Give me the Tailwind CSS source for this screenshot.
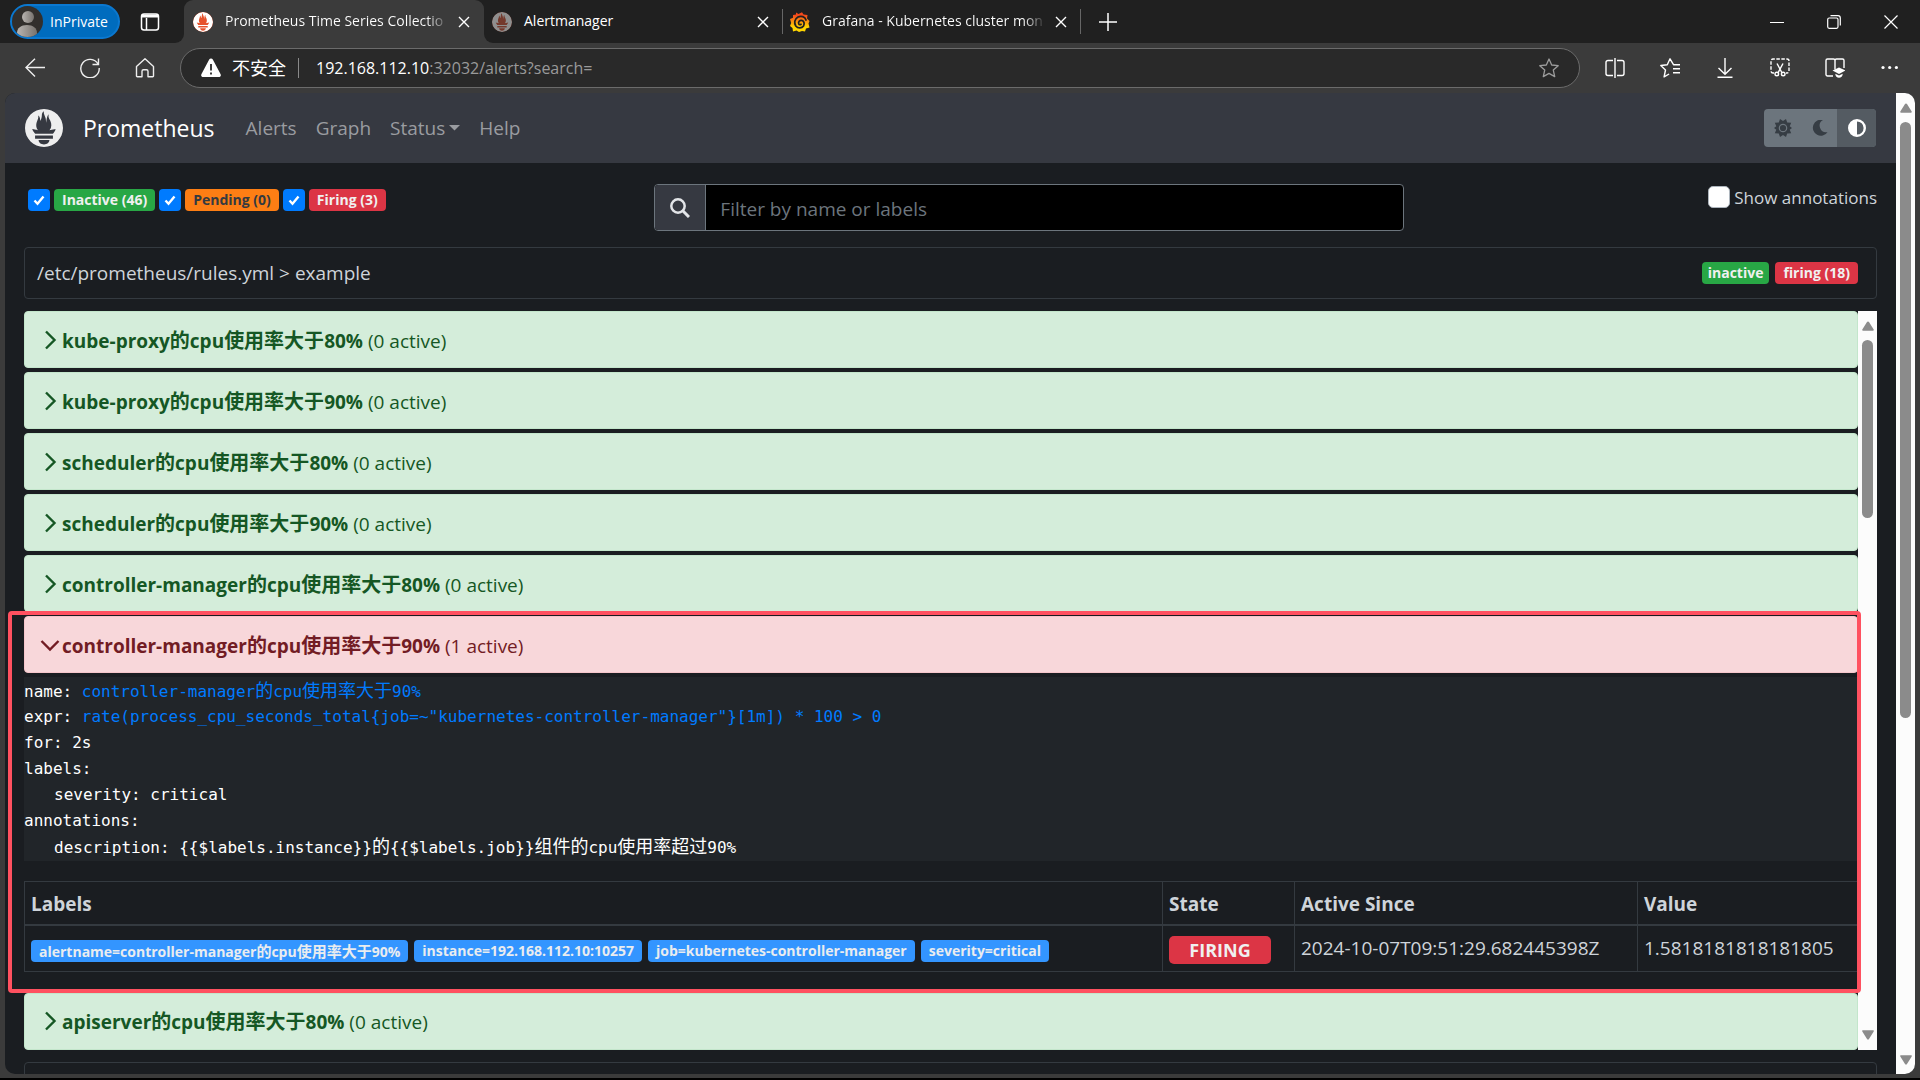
<!DOCTYPE html>
<html lang="zh">
<head>
    <meta charset="UTF-8">
    <meta name="viewport" content="width=device-width, initial-scale=1.0">
    <title>Prometheus Time Series Collection and Processing Server</title>
    <script src="https://cdn.jsdelivr.net/npm/@tailwindcss/browser@4"></script>
</head>
<body class="h-screen overflow-hidden bg-black pb-[2px] font-['Open_Sans','Noto_Sans_CJK_SC',sans-serif]">
    <svg class="hidden">
        <symbol id="flame" viewBox="0 0 24 24">
            <path fill="currentColor" d="M12 0C5.373 0 0 5.372 0 12c0 6.627 5.373 12 12 12s12-5.373 12-12c0-6.628-5.373-12-12-12zm0 22.46c-1.885 0-3.414-1.26-3.414-2.814h6.828c0 1.553-1.528 2.813-3.414 2.813zm5.64-3.745H6.36v-2.046h11.28v2.046zm-.04-3.098H6.391c-.037-.043-.075-.086-.111-.13-1.155-1.401-1.427-2.133-1.69-2.879-.005-.025 1.4.287 2.395.511 0 0 .513.119 1.262.255-.72-.843-1.147-1.915-1.147-3.01 0-2.406 1.845-4.508 1.18-6.207.648.053 1.34 1.367 1.387 3.422.689-.951.977-2.69.977-3.755 0-1.103.727-2.385 1.454-2.429-.648 1.069.168 1.984.894 4.256.272.854.237 2.29.447 3.201.07-1.892.395-4.652 1.595-5.605-.529 1.2.079 2.702.494 3.424.671 1.164 1.078 2.047 1.078 3.716a4.642 4.642 0 0 1-1.11 2.996c.792-.149 1.34-.283 1.34-.283l2.573-.502s-.374 1.538-1.81 3.019z"/>
        </symbol>
        <symbol id="close" viewBox="0 0 12 12">
            <path d="M1 1l10 10M11 1L1 11" fill="none" stroke="currentColor" stroke-width="1.4"/>
        </symbol>
        <symbol id="chevron-right" viewBox="0 0 20 20">
            <path d="M6 1.500l8.500 8.500L6 18.500" fill="none" stroke="currentColor" stroke-width="2.400"/>
        </symbol>
        <symbol id="chevron-down" viewBox="0 0 20 20">
            <path d="M1.500 6l8.500 8.500L18.500 6" fill="none" stroke="currentColor" stroke-width="2.400"/>
        </symbol>
        <symbol id="check" viewBox="0 0 12 12">
            <path d="M1.500 6.500l3 3.200L10.500 2.500" fill="none" stroke="currentColor" stroke-width="2.400"/>
        </symbol>
        <symbol id="arrow-up" viewBox="0 0 12 10">
            <path d="M6 .5c.5 0 .8.2 1 .6L11.700 8.500c.3.700 0 1.200-.7 1.200H1C.3 9.700 0 9.200.3 8.500L5 1.100C5.200.7 5.500.5 6 .5z" fill="#8b8b8b"/>
        </symbol>
    </svg>

    <div class="flex h-full flex-col bg-[#3b3b3b]">
        <!-- Tab strip -->
        <header class="flex h-[43px] shrink-0 text-[14px] text-white">
            <div class="flex w-[184px] items-center rounded-br-[9px] bg-[#202020] pl-[10px]">
                <button class="flex h-[35px] w-[110px] items-center gap-[7px] rounded-full border-2 border-[#0b78d0] bg-[#006cbe]">
                    <svg class="size-[31px] shrink-0" viewBox="0 0 31 31">
                        <defs>
                            <linearGradient id="skin"><stop offset="0" stop-color="#b9b5b1"/><stop offset="1" stop-color="#77726d"/></linearGradient>
                            <clipPath id="disc"><circle cx="15.500" cy="15.500" r="15.500"/></clipPath>
                        </defs>
                        <g clip-path="url(#disc)">
                            <path fill="#322f2c" d="M0 0h31v31H0z"/>
                            <circle cx="16" cy="11" r="6" fill="url(#skin)"/>
                            <path d="M5 31v-4c0-5 4-8 10-8s10 3 10 8v4z" fill="url(#skin)"/>
                        </g>
                    </svg>
                    InPrivate
                </button>
                <button class="ml-[20px]" aria-label="Tab actions">
                    <svg class="size-[20px]" viewBox="0 0 20 20" fill="none" stroke="#fff" stroke-width="1.500">
                        <rect x="1.500" y="2" width="17" height="16" rx="2.500"/>
                        <path d="M2 4h16" stroke-width="3"/><path d="M6.500 6v12"/>
                    </svg>
                </button>
            </div>
            <div class="w-[300px] bg-[#202020]">
                <div class="flex h-full items-center rounded-t-[9px] bg-[#3b3b3b] pl-[9px]">
                    <svg class="size-[20px] shrink-0 rounded-full bg-[#e6522c] text-white"><use href="#flame"/></svg>
                    <span class="ml-[12px] w-[224px] bg-linear-to-r from-white from-90% to-transparent bg-clip-text pb-[2px] whitespace-nowrap text-transparent">Prometheus Time Series Collectio</span>
                    <button class="ml-[9px]" aria-label="Close tab"><svg class="size-[12px]"><use href="#close"/></svg></button>
                </div>
            </div>
            <div class="flex grow rounded-bl-[9px] bg-[#202020]">
                <div class="flex w-[298px] items-center pl-[8px]">
                    <svg class="size-[20px] shrink-0 rounded-full bg-[#74392c] text-[#8f8f8f]"><use href="#flame"/></svg>
                    <span class="ml-[12px] w-[224px] pb-[2px] whitespace-nowrap">Alertmanager</span>
                    <button class="ml-[9px]" aria-label="Close tab"><svg class="size-[12px]"><use href="#close"/></svg></button>
                </div>
                <div class="my-[9px] w-px bg-[#666]"></div>
                <div class="flex w-[297px] items-center pl-[7px]">
                    <svg class="size-[20px] shrink-0" viewBox="0 0 20 20" fill="none">
                        <defs><linearGradient id="flare" x2="0" y2="1"><stop offset=".15" stop-color="#f4491c"/><stop offset=".75" stop-color="#ffd500"/></linearGradient></defs>
                        <path fill="url(#flare)" d="M6 .500l2.500 1.500L12 .300l1.500 2.200 4 .5-.5 3.500 2.500 2.500-1 2.500 1 4-3.500 1-1 3-3-.5L9 20l-2.500-1.500L3 19.500l-.5-3.500L0 14l1.200-3L0 7l3-1.200L3 3l3-.5z"/>
                        <path stroke="#202020" stroke-width="1.800" stroke-linecap="round" d="M16 8c-1-3.500-5-4.500-8-3-3.500 2-4.200 6-2.200 9 2 2.500 6 2.500 7.700 0 1.400-2.300.5-5-1.700-5.600-2.300-.4-3.800 1.600-3 3.400.5 1 1.600 1.100 2.200.5"/>
                    </svg>
                    <span class="ml-[12px] w-[224px] bg-linear-to-r from-white from-90% to-transparent bg-clip-text pb-[2px] whitespace-nowrap text-transparent">Grafana - Kubernetes cluster mon</span>
                    <button class="ml-[9px]" aria-label="Close tab"><svg class="size-[12px]"><use href="#close"/></svg></button>
                </div>
                <div class="my-[9px] w-px bg-[#666]"></div>
                <button class="ml-[18px]" aria-label="New tab">
                    <svg class="size-[18px]" viewBox="0 0 18 18"><path d="M9 0v18M0 9h18" stroke="#fff" stroke-width="1.500"/></svg>
                </button>
                <div class="ml-auto flex items-center gap-[43px] pr-[22px]">
                    <button aria-label="Minimize"><svg class="size-[14px]" viewBox="0 0 14 14"><path d="M0 7.500h14" stroke="#fff"/></svg></button>
                    <button aria-label="Restore"><svg class="size-[14px]" viewBox="0 0 14 14" fill="none" stroke="#fff" stroke-width="1.200"><rect x=".7" y="3" width="10.300" height="10.300" rx="1.500"/><path d="M3.500.700h7.500a2.300 2.300 0 0 1 2.300 2.300v7.500"/></svg></button>
                    <button aria-label="Close"><svg class="size-[14px]" viewBox="0 0 14 14"><path d="M.5.500l13 13M13.500.500l-13 13" stroke="#fff" stroke-width="1.200"/></svg></button>
                </div>
            </div>
        </header>

        <!-- Address bar -->
        <div class="flex h-[50px] shrink-0 items-center pr-[20px] pl-[25px] text-white">
            <div class="flex w-[155px] gap-[35px]">
                <button aria-label="Back"><svg class="size-[20px]" viewBox="0 0 20 20" fill="none" stroke="#eee" stroke-width="1.400"><path d="M20 9.500H1M10 .700L1 9.500l9 9"/></svg></button>
                <button aria-label="Refresh"><svg class="size-[20px]" viewBox="0 0 20 20" fill="none" stroke="#eee" stroke-width="1.400"><path d="M18 6A9.200 9.200 0 1 0 19.200 10M18.500.500v6h-6"/></svg></button>
                <button aria-label="Home"><svg class="size-[20px]" viewBox="0 0 20 20" fill="none" stroke="#eee" stroke-width="1.400" stroke-linejoin="round"><path d="M1.500 8.500L10 .800l8.500 7.700V18a.8.800 0 0 1-.8.800H13v-5.500a1.500 1.500 0 0 0-1.500-1.500h-3A1.500 1.500 0 0 0 7 13.300v5.500H2.300a.8.800 0 0 1-.8-.8z"/></svg></button>
            </div>
            <div class="flex h-[40px] grow items-center rounded-full border border-[#6b6b6b] bg-[#292929] px-[20px] text-[16px]">
                <svg class="size-[20px]" viewBox="0 0 20 20"><path d="M10 .500c.8 0 1.400.4 1.800 1.100l7.700 14.400c.9 1.600 0 3-1.700 3H2.200C.5 19-.4 17.600.5 16L8.200 1.600C8.600.9 9.200.5 10 .500z" fill="#fff"/><path d="M10 6v6.500M10 14.500v2" stroke="#292929" stroke-width="1.800"/></svg>
                <span class="ml-[11px] text-[18px]">不安全</span>
                <span class="mx-[12px] h-[20px] w-px bg-[#8a8a8a]"></span>
                <span class="ml-[5px] text-[#9a9a9a]"><span class="text-white">192.168.112.10</span>:32032/alerts?search=</span>
                <button class="ml-auto" aria-label="Favorite"><svg class="size-[20px]" viewBox="0 0 20 20" fill="none" stroke="#9c9c9c" stroke-width="1.300" stroke-linejoin="round"><path d="M10 1l2.700 6 6.500.700-4.900 4.400 1.400 6.500L10 15.400l-5.700 3.200 1.400-6.500L.8 7.700 7.300 7z"/></svg></button>
            </div>
            <div class="ml-[25px] flex gap-[35px]">
                <button aria-label="Split screen"><svg class="size-[20px]" viewBox="0 0 20 20" fill="none" stroke="#fff" stroke-width="1.400"><path d="M10 0v20M8 2.500H3a2 2 0 0 0-2 2v11a2 2 0 0 0 2 2h5M12 2.500h5a2 2 0 0 1 2 2v11a2 2 0 0 1-2 2h-5"/></svg></button>
                <button aria-label="Favorites"><svg class="size-[20px]" viewBox="0 0 20 20" fill="none" stroke="#fff" stroke-width="1.400" stroke-linejoin="round"><path d="M20 6.700h-6.500L10 .800 7.300 6.700 .8 7.500l4.700 4.500-1.400 6.800 5-2.800M13 10.800h7M13 14.800h7"/></svg></button>
                <button aria-label="Downloads"><svg class="size-[20px]" viewBox="0 0 20 20" fill="none" stroke="#fff" stroke-width="1.400"><path d="M10 0v16M3.500 10l6.500 6.300 6.500-6.300M2.500 19.300h15"/></svg></button>
                <button aria-label="Screenshot"><svg class="size-[20px]" viewBox="0 0 20 20" fill="none" stroke="#fff" stroke-width="1.400"><path d="M4 15H3a2 2 0 0 1-2-2V3a2 2 0 0 1 2-2h14a2 2 0 0 1 2 2v10a2 2 0 0 1-2 2h-1" stroke-dasharray="3.500 1.500"/><path d="M7 5.500l5 9.300M13 5.500l-5 9.300"/><circle cx="6.800" cy="16" r="1.800"/><circle cx="13.200" cy="16" r="1.800"/></svg></button>
                <button aria-label="Learning"><svg class="size-[20px]" viewBox="0 0 20 20" fill="none" stroke="#fff" stroke-width="1.400"><path d="M8 18H2.500A1.500 1.500 0 0 1 1 16.500v-14A1.500 1.500 0 0 1 2.500 1H8.500A1.500 1.500 0 0 1 10 2.500v9M10 2.500A1.500 1.500 0 0 1 11.500 1h6A1.500 1.500 0 0 1 19 2.500V10"/><path fill="#fff" stroke="none" d="M14 9.500l6.500 3-6.500 3.500-6.500-3.500zM10.300 15.800l3.700 1.700 3.700-1.700c0 2.700-1.700 4-3.700 4s-3.700-1.300-3.700-4z"/></svg></button>
                <button aria-label="Settings and more"><svg class="size-[20px]" viewBox="0 0 20 20" fill="#fff"><circle cx="3" cy="9.500" r="1.600"/><circle cx="9.700" cy="9.500" r="1.600"/><circle cx="16.400" cy="9.500" r="1.600"/></svg></button>
            </div>
        </div>

        <!-- Page -->
        <div class="mr-[5px] mb-[4px] ml-[5px] flex min-h-0 grow overflow-hidden rounded-[10px] bg-[#1a1d21] text-[19px] text-[#ced4da]">
            <div class="flex min-w-0 grow flex-col">
                <nav class="flex h-[70px] shrink-0 items-center bg-[#363941] px-[20px] text-[#9a9ca0]">
                    <svg class="size-[38px] text-[#eee]"><use href="#flame"/></svg>
                    <a href="#" class="ml-[20px] text-[23px] text-white">Prometheus</a>
                    <div class="ml-[31px] flex items-center gap-[19px]">
                        <a href="#">Alerts</a>
                        <a href="#">Graph</a>
                        <button class="flex items-center gap-[4px]">Status
                            <svg class="w-[11px]" viewBox="0 0 12 6"><path d="M0 0h12L6 6z" fill="currentColor"/></svg>
                        </button>
                        <a href="#">Help</a>
                    </div>
                    <div class="ml-auto flex h-[38px] overflow-hidden rounded-[4px] bg-[#6c757d]">
                        <button class="flex w-[38px] items-center justify-center" aria-label="Light">
                            <svg class="size-[18px]" viewBox="0 0 18 18"><path d="M6 0l3 2 3-2 1.200 3.500 4 .300-1.500 3.400L18 9l-2.300 1.800 1.500 3.400-4 .300L12 18l-3-2-3 2-1.200-3.500-4-.300 1.500-3.400L0 9l2.300-1.800L.8 3.800l4-.300z" fill="#363d44"/><circle cx="9" cy="9" r="3.700" fill="none" stroke="#6c757d" stroke-width="1.200"/></svg>
                        </button>
                        <button class="flex w-[35px] items-center justify-center" aria-label="Dark">
                            <svg class="size-[16px]" viewBox="0 0 16 16"><path d="M11 0a8 8 0 1 0 4.500 12.200A6.600 6.600 0 0 1 11 0z" fill="#363d44"/></svg>
                        </button>
                        <button class="flex w-[39px] items-center justify-center bg-[#545b62]" aria-label="Browser default">
                            <svg class="size-[18px]" viewBox="0 0 18 18"><circle cx="9" cy="9" r="7.800" fill="none" stroke="#fff" stroke-width="2.400"/><path d="M9 1v16A8 8 0 0 1 9 1z" fill="#fff"/></svg>
                        </button>
                    </div>
                </nav>

                <!-- Filters -->
                <form class="grid h-[84px] shrink-0 grid-cols-12 pt-[21px]">
                    <div class="col-span-4 flex items-start gap-[4px] pt-[5px] pl-[23px] text-[14px] font-bold text-[#f0f0f0]">
                        <span class="grid place-items-center">
                            <input id="inactive" type="checkbox" checked class="col-start-1 row-start-1 size-[22px] appearance-none rounded-[4px] bg-[#007bff]">
                            <svg class="pointer-events-none col-start-1 row-start-1 size-[12px] text-white"><use href="#check"/></svg>
                        </span>
                        <label for="inactive" class="rounded-[4px] bg-[#28a745] px-[8px] leading-[22px]">Inactive (46)</label>
                        <span class="grid place-items-center">
                            <input id="pending" type="checkbox" checked class="col-start-1 row-start-1 size-[22px] appearance-none rounded-[4px] bg-[#007bff]">
                            <svg class="pointer-events-none col-start-1 row-start-1 size-[12px] text-white"><use href="#check"/></svg>
                        </span>
                        <label for="pending" class="rounded-[4px] bg-[#fd7e14] px-[8px] leading-[22px] text-[#343a40]">Pending (0)</label>
                        <span class="grid place-items-center">
                            <input id="firing" type="checkbox" checked class="col-start-1 row-start-1 size-[22px] appearance-none rounded-[4px] bg-[#007bff]">
                            <svg class="pointer-events-none col-start-1 row-start-1 size-[12px] text-white"><use href="#check"/></svg>
                        </span>
                        <label for="firing" class="rounded-[4px] bg-[#dc3545] px-[8px] leading-[22px]">Firing (3)</label>
                    </div>
                    <div class="col-span-5 px-[19px]">
                        <div class="flex h-[47px] overflow-hidden rounded-[4px] border border-[#6c757d] bg-black">
                            <label for="search" class="flex w-[51px] items-center justify-center border-r border-[#6c757d] bg-[#363941]">
                                <svg class="size-[20px]" viewBox="0 0 20 20" fill="none" stroke="#e3e5e8" stroke-width="2.500"><circle cx="8" cy="8" r="6.700"/><path d="M12.800 12.800l6.200 6.200" stroke-width="3"/></svg>
                            </label>
                            <input id="search" type="text" placeholder="Filter by name or labels" class="min-w-0 grow px-[14px] pt-[3px] text-[19px] placeholder:text-[#6c757d]">
                        </div>
                    </div>
                    <div class="col-span-3 flex items-start justify-end gap-[4px] pr-[19px]">
                        <input id="annotations" type="checkbox" class="mt-[2px] size-[22px] appearance-none rounded-[5px] border border-[#adb5bd] bg-white">
                        <label for="annotations" class="text-[17px] leading-[28px]">Show annotations</label>
                    </div>
                </form>

                <main class="px-[19px]">
                    <div class="flex h-[52px] items-center gap-[6px] rounded-[4px] border border-[#343a40] pr-[18px] pl-[12px]">
                        <span class="mr-auto">/etc/prometheus/rules.yml &gt; example</span>
                        <span class="rounded-[4px] bg-[#28a745] px-[6px] text-[14px] leading-[22px] font-bold text-[#f0f0f0]">inactive</span>
                        <span class="rounded-[4px] bg-[#dc3545] px-[8px] text-[14px] leading-[22px] font-bold text-[#f0f0f0]">firing (18)</span>
                    </div>

                    <div class="mt-[12px] flex">
                        <div class="min-w-0 grow">
                            <div class="flex flex-col gap-[4px] text-[#155724]">
                                <button class="flex h-[57px] w-full items-center gap-[2px] rounded-[4px] border border-[#c3e6cb] bg-[#d4edda] pl-[15px]"><svg class="size-[20px]"><use href="#chevron-right"/></svg><span class="pt-[2px]"><b>kube-proxy<span class="text-[20px]">的</span>cpu<span class="text-[20px]">使用率大于</span>80%</b> (0 active)</span></button>
                                <button class="flex h-[57px] w-full items-center gap-[2px] rounded-[4px] border border-[#c3e6cb] bg-[#d4edda] pl-[15px]"><svg class="size-[20px]"><use href="#chevron-right"/></svg><span class="pt-[2px]"><b>kube-proxy<span class="text-[20px]">的</span>cpu<span class="text-[20px]">使用率大于</span>90%</b> (0 active)</span></button>
                                <button class="flex h-[57px] w-full items-center gap-[2px] rounded-[4px] border border-[#c3e6cb] bg-[#d4edda] pl-[15px]"><svg class="size-[20px]"><use href="#chevron-right"/></svg><span class="pt-[2px]"><b>scheduler<span class="text-[20px]">的</span>cpu<span class="text-[20px]">使用率大于</span>80%</b> (0 active)</span></button>
                                <button class="flex h-[57px] w-full items-center gap-[2px] rounded-[4px] border border-[#c3e6cb] bg-[#d4edda] pl-[15px]"><svg class="size-[20px]"><use href="#chevron-right"/></svg><span class="pt-[2px]"><b>scheduler<span class="text-[20px]">的</span>cpu<span class="text-[20px]">使用率大于</span>90%</b> (0 active)</span></button>
                                <button class="flex h-[57px] w-full items-center gap-[2px] rounded-[4px] border border-[#c3e6cb] bg-[#d4edda] pl-[15px]"><svg class="size-[20px]"><use href="#chevron-right"/></svg><span class="pt-[2px]"><b>controller-manager<span class="text-[20px]">的</span>cpu<span class="text-[20px]">使用率大于</span>80%</b> (0 active)</span></button>
                            </div>

                            <!-- Firing rule, expanded -->
                            <section class="relative pt-[4px] pb-[21px]">
                                <button class="flex h-[57px] w-full items-center gap-[2px] rounded-[4px] border border-[#f5c6cb] bg-[#f8d7da] pl-[15px] text-[#721c24]"><svg class="size-[20px]"><use href="#chevron-down"/></svg><span class="pt-[2px]"><b>controller-manager<span class="text-[20px]">的</span>cpu<span class="text-[20px]">使用率大于</span>90%</b> (1 active)</span></button>
                                <div class="mt-[4px] bg-[#212529] py-px font-['DejaVu_Sans_Mono','Noto_Sans_CJK_SC',monospace] text-[16px] leading-[26px] text-white">
                                    <div class="h-[26px]">name: <a href="#" class="text-[#007bff]">controller-manager<span class="text-[18px]">的</span>cpu<span class="text-[18px]">使用率大于</span>90%</a></div>
                                    <div class="h-[26px]">expr: <a href="#" class="text-[#007bff]">rate(process_cpu_seconds_total{job=~"kubernetes-controller-manager"}[1m]) * 100 &gt; 0</a></div>
                                    <div class="h-[26px]">for: 2s</div>
                                    <div class="h-[26px]">labels:</div>
                                    <div class="h-[26px] pl-[30px]">severity: critical</div>
                                    <div class="h-[26px]">annotations:</div>
                                    <div class="h-[26px] pl-[30px]">description: {{$labels.instance}}<span class="text-[18px]">的</span>{{$labels.job}}<span class="text-[18px]">组件的</span>cpu<span class="text-[18px]">使用率超过</span>90%</div>
                                </div>
                                <table class="mt-[20px] w-full table-fixed border-collapse border border-[#343a40] text-left">
                                    <thead>
                                        <tr class="border-b-2 border-[#343a40] leading-[30px]">
                                            <th class="px-[6px] pt-[7px] pb-[5px]">Labels</th>
                                            <th class="w-[132px] border-l border-[#343a40] px-[6px] pt-[7px] pb-[5px]">State</th>
                                            <th class="w-[343px] border-l border-[#343a40] px-[6px] pt-[7px] pb-[5px]">Active Since</th>
                                            <th class="w-[220px] border-l border-[#343a40] px-[6px] pt-[7px] pb-[5px]">Value</th>
                                        </tr>
                                    </thead>
                                    <tbody>
                                        <tr class="h-[46px]">
                                            <td class="px-[6px]">
                                                <div class="flex gap-[6px] pt-[5px] text-[14px] leading-[22px] font-bold text-[#e9ecef]">
                                                    <span class="h-[22px] rounded-[4px] bg-[#3395ff] px-[8px]">alertname=controller-manager<span class="text-[15px]">的</span>cpu<span class="text-[15px]">使用率大于</span>90%</span>
                                                    <span class="h-[22px] rounded-[4px] bg-[#3395ff] px-[8px]">instance=192.168.112.10:10257</span>
                                                    <span class="h-[22px] rounded-[4px] bg-[#3395ff] px-[8px]">job=kubernetes-controller-manager</span>
                                                    <span class="h-[22px] rounded-[4px] bg-[#3395ff] px-[8px]">severity=critical</span>
                                                </div>
                                            </td>
                                            <td class="border-l border-[#343a40] px-[6px] pt-[4px]">
                                                <span class="block w-[102px] rounded-[5px] bg-[#dc3545] text-center text-[18px] leading-[28px] font-bold text-[#f0f0f0]">FIRING</span>
                                            </td>
                                            <td class="border-l border-[#343a40] px-[6px]">2024-10-07T09:51:29.682445398Z</td>
                                            <td class="border-l border-[#343a40] px-[6px]">1.5818181818181805</td>
                                        </tr>
                                    </tbody>
                                </table>
                                <!-- Highlight frame round the firing rule -->
                                <div class="pointer-events-none absolute -top-px -right-[3px] bottom-0 -left-[16px] z-10 rounded-[4px] border-4 border-[#ff5160]"></div>
                            </section>

                            <button class="flex h-[57px] w-full items-center gap-[2px] rounded-[4px] border border-[#c3e6cb] bg-[#d4edda] pl-[15px] text-[#155724]"><svg class="size-[20px]"><use href="#chevron-right"/></svg><span class="pt-[2px]"><b>apiserver<span class="text-[20px]">的</span>cpu<span class="text-[20px]">使用率大于</span>80%</b> (0 active)</span></button>
                        </div>
                        <div class="flex w-[19px] shrink-0 flex-col items-center bg-[#fcfcfc] py-[10px]">
                            <svg class="h-[10px] w-[12px]"><use href="#arrow-up"/></svg>
                            <div class="mt-[9px] h-[178px] w-[11px] rounded-full bg-[#8b8b8b]"></div>
                            <svg class="mt-auto h-[10px] w-[12px] rotate-180"><use href="#arrow-up"/></svg>
                        </div>
                    </div>

                    <div class="mt-[12px] h-[52px] rounded-[4px] border border-[#343a40]"></div>
                </main>
            </div>

            <div class="flex w-[19px] shrink-0 flex-col items-center bg-[#fcfcfc] pt-[10px] pb-[9px]">
                <svg class="h-[10px] w-[12px]"><use href="#arrow-up"/></svg>
                <div class="mt-[9px] h-[596px] w-[11px] rounded-full bg-[#8b8b8b]"></div>
                <svg class="mt-auto h-[10px] w-[12px] rotate-180"><use href="#arrow-up"/></svg>
            </div>
        </div>
    </div>
</body>
</html>
